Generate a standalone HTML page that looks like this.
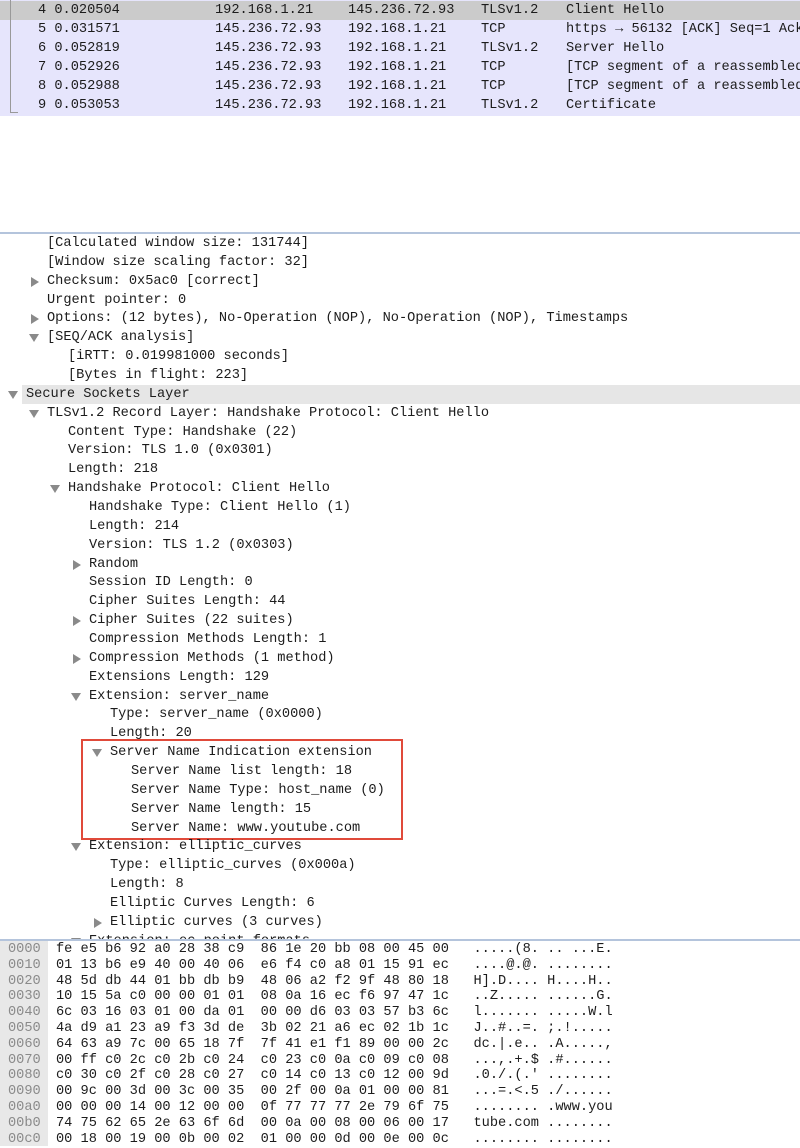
<!DOCTYPE html>
<html><head><meta charset="utf-8"><style>
*{margin:0;padding:0;box-sizing:border-box}
body{width:800px;height:1146px;overflow:hidden;background:#fff;position:relative;font-family:"Liberation Mono","DejaVu Sans Mono",monospace;font-size:13.65px;color:#1c1c1c}
.r{position:absolute;height:19px;line-height:19px;white-space:pre}
.pk{position:absolute;left:0;width:800px;height:19px;background:#e6e5fc}
.a{position:absolute;width:0;height:0}
.dn{border-left:5px solid transparent;border-right:5px solid transparent;border-top:8px solid #8a8a8a}
.rt{border-top:5px solid transparent;border-bottom:5px solid transparent;border-left:8px solid #8a8a8a}
.h{position:absolute;height:16px;line-height:16px;white-space:pre;margin-top:2px}
.off{color:#8a8a8a}
</style></head><body>
<div class="pk" style="top:0;height:116px"></div>
<div class="pk" style="background:#cbcbcb;height:19px;top:1px"></div>
<div style="position:absolute;left:10px;top:0;width:1px;height:113px;background:#999"></div>
<div style="position:absolute;left:10px;top:112px;width:8px;height:1px;background:#999"></div>
<div class="r" style="top:1px;left:38px">4 0.020504</div><div class="r" style="top:1px;left:215px">192.168.1.21</div><div class="r" style="top:1px;left:348px">145.236.72.93</div><div class="r" style="top:1px;left:481px">TLSv1.2</div><div class="r" style="top:1px;left:566px">Client Hello</div>
<div class="r" style="top:20px;left:38px">5 0.031571</div><div class="r" style="top:20px;left:215px">145.236.72.93</div><div class="r" style="top:20px;left:348px">192.168.1.21</div><div class="r" style="top:20px;left:481px">TCP</div><div class="r" style="top:20px;left:566px">https → 56132 [ACK] Seq=1 Ack</div>
<div class="r" style="top:39px;left:38px">6 0.052819</div><div class="r" style="top:39px;left:215px">145.236.72.93</div><div class="r" style="top:39px;left:348px">192.168.1.21</div><div class="r" style="top:39px;left:481px">TLSv1.2</div><div class="r" style="top:39px;left:566px">Server Hello</div>
<div class="r" style="top:58px;left:38px">7 0.052926</div><div class="r" style="top:58px;left:215px">145.236.72.93</div><div class="r" style="top:58px;left:348px">192.168.1.21</div><div class="r" style="top:58px;left:481px">TCP</div><div class="r" style="top:58px;left:566px">[TCP segment of a reassembled</div>
<div class="r" style="top:77px;left:38px">8 0.052988</div><div class="r" style="top:77px;left:215px">145.236.72.93</div><div class="r" style="top:77px;left:348px">192.168.1.21</div><div class="r" style="top:77px;left:481px">TCP</div><div class="r" style="top:77px;left:566px">[TCP segment of a reassembled</div>
<div class="r" style="top:96px;left:38px">9 0.053053</div><div class="r" style="top:96px;left:215px">145.236.72.93</div><div class="r" style="top:96px;left:348px">192.168.1.21</div><div class="r" style="top:96px;left:481px">TLSv1.2</div><div class="r" style="top:96px;left:566px">Certificate</div>
<div style="position:absolute;left:0;top:232px;width:800px;height:2px;background:#b4c4dc"></div>
<div style="position:absolute;left:22px;top:385px;width:778px;height:19px;background:#e6e6e6"></div>
<div class="r" style="top:234px;left:47px">[Calculated window size: 131744]</div>
<div class="r" style="top:253px;left:47px">[Window size scaling factor: 32]</div>
<div class="a rt" style="left:31px;top:277px"></div><div class="r" style="top:272px;left:47px">Checksum: 0x5ac0 [correct]</div>
<div class="r" style="top:291px;left:47px">Urgent pointer: 0</div>
<div class="a rt" style="left:31px;top:314px"></div><div class="r" style="top:309px;left:47px">Options: (12 bytes), No-Operation (NOP), No-Operation (NOP), Timestamps</div>
<div class="a dn" style="left:29px;top:334px"></div><div class="r" style="top:328px;left:47px">[SEQ/ACK analysis]</div>
<div class="r" style="top:347px;left:68px">[iRTT: 0.019981000 seconds]</div>
<div class="r" style="top:366px;left:68px">[Bytes in flight: 223]</div>
<div class="a dn" style="left:8px;top:391px"></div><div class="r" style="top:385px;left:26px">Secure Sockets Layer</div>
<div class="a dn" style="left:29px;top:410px"></div><div class="r" style="top:404px;left:47px">TLSv1.2 Record Layer: Handshake Protocol: Client Hello</div>
<div class="r" style="top:423px;left:68px">Content Type: Handshake (22)</div>
<div class="r" style="top:441px;left:68px">Version: TLS 1.0 (0x0301)</div>
<div class="r" style="top:460px;left:68px">Length: 218</div>
<div class="a dn" style="left:50px;top:485px"></div><div class="r" style="top:479px;left:68px">Handshake Protocol: Client Hello</div>
<div class="r" style="top:498px;left:89px">Handshake Type: Client Hello (1)</div>
<div class="r" style="top:517px;left:89px">Length: 214</div>
<div class="r" style="top:536px;left:89px">Version: TLS 1.2 (0x0303)</div>
<div class="a rt" style="left:73px;top:560px"></div><div class="r" style="top:555px;left:89px">Random</div>
<div class="r" style="top:573px;left:89px">Session ID Length: 0</div>
<div class="r" style="top:592px;left:89px">Cipher Suites Length: 44</div>
<div class="a rt" style="left:73px;top:616px"></div><div class="r" style="top:611px;left:89px">Cipher Suites (22 suites)</div>
<div class="r" style="top:630px;left:89px">Compression Methods Length: 1</div>
<div class="a rt" style="left:73px;top:654px"></div><div class="r" style="top:649px;left:89px">Compression Methods (1 method)</div>
<div class="r" style="top:668px;left:89px">Extensions Length: 129</div>
<div class="a dn" style="left:71px;top:693px"></div><div class="r" style="top:687px;left:89px">Extension: server_name</div>
<div class="r" style="top:705px;left:110px">Type: server_name (0x0000)</div>
<div class="r" style="top:724px;left:110px">Length: 20</div>
<div class="a dn" style="left:92px;top:749px"></div><div class="r" style="top:743px;left:110px">Server Name Indication extension</div>
<div class="r" style="top:762px;left:131px">Server Name list length: 18</div>
<div class="r" style="top:781px;left:131px">Server Name Type: host_name (0)</div>
<div class="r" style="top:800px;left:131px">Server Name length: 15</div>
<div class="r" style="top:819px;left:131px">Server Name: www.youtube.com</div>
<div style="position:absolute;left:81px;top:739px;width:322px;height:101px;border:2px solid #e04a3a"></div>
<div class="a dn" style="left:71px;top:843px"></div><div class="r" style="top:837px;left:89px">Extension: elliptic_curves</div>
<div class="r" style="top:856px;left:110px">Type: elliptic_curves (0x000a)</div>
<div class="r" style="top:875px;left:110px">Length: 8</div>
<div class="r" style="top:894px;left:110px">Elliptic Curves Length: 6</div>
<div class="a rt" style="left:94px;top:918px"></div><div class="r" style="top:913px;left:110px">Elliptic curves (3 curves)</div>
<div class="a dn" style="left:71px;top:938px"></div><div class="r" style="top:932px;left:89px">Extension: ec_point_formats</div>
<div style="position:absolute;left:0;top:939px;width:800px;height:207px;background:#fff;border-top:2px solid #b4c4dc"></div>
<div style="position:absolute;left:0;top:941px;width:48px;height:205px;background:#e8e8e8"></div>
<div class="h off" style="left:8px;top:940px">0000</div><div class="h" style="left:56px;top:940px">fe e5 b6 92 a0 28 38 c9  86 1e 20 bb 08 00 45 00   .....(8. .. ...E.</div>
<div class="h off" style="left:8px;top:956px">0010</div><div class="h" style="left:56px;top:956px">01 13 b6 e9 40 00 40 06  e6 f4 c0 a8 01 15 91 ec   ....@.@. ........</div>
<div class="h off" style="left:8px;top:972px">0020</div><div class="h" style="left:56px;top:972px">48 5d db 44 01 bb db b9  48 06 a2 f2 9f 48 80 18   H].D.... H....H..</div>
<div class="h off" style="left:8px;top:987px">0030</div><div class="h" style="left:56px;top:987px">10 15 5a c0 00 00 01 01  08 0a 16 ec f6 97 47 1c   ..Z..... ......G.</div>
<div class="h off" style="left:8px;top:1003px">0040</div><div class="h" style="left:56px;top:1003px">6c 03 16 03 01 00 da 01  00 00 d6 03 03 57 b3 6c   l....... .....W.l</div>
<div class="h off" style="left:8px;top:1019px">0050</div><div class="h" style="left:56px;top:1019px">4a d9 a1 23 a9 f3 3d de  3b 02 21 a6 ec 02 1b 1c   J..#..=. ;.!.....</div>
<div class="h off" style="left:8px;top:1035px">0060</div><div class="h" style="left:56px;top:1035px">64 63 a9 7c 00 65 18 7f  7f 41 e1 f1 89 00 00 2c   dc.|.e.. .A.....,</div>
<div class="h off" style="left:8px;top:1051px">0070</div><div class="h" style="left:56px;top:1051px">00 ff c0 2c c0 2b c0 24  c0 23 c0 0a c0 09 c0 08   ...,.+.$ .#......</div>
<div class="h off" style="left:8px;top:1066px">0080</div><div class="h" style="left:56px;top:1066px">c0 30 c0 2f c0 28 c0 27  c0 14 c0 13 c0 12 00 9d   .0./.(.' ........</div>
<div class="h off" style="left:8px;top:1082px">0090</div><div class="h" style="left:56px;top:1082px">00 9c 00 3d 00 3c 00 35  00 2f 00 0a 01 00 00 81   ...=.&lt;.5 ./......</div>
<div class="h off" style="left:8px;top:1098px">00a0</div><div class="h" style="left:56px;top:1098px">00 00 00 14 00 12 00 00  0f 77 77 77 2e 79 6f 75   ........ .www.you</div>
<div class="h off" style="left:8px;top:1114px">00b0</div><div class="h" style="left:56px;top:1114px">74 75 62 65 2e 63 6f 6d  00 0a 00 08 00 06 00 17   tube.com ........</div>
<div class="h off" style="left:8px;top:1130px">00c0</div><div class="h" style="left:56px;top:1130px">00 18 00 19 00 0b 00 02  01 00 00 0d 00 0e 00 0c   ........ ........</div>
</body></html>
